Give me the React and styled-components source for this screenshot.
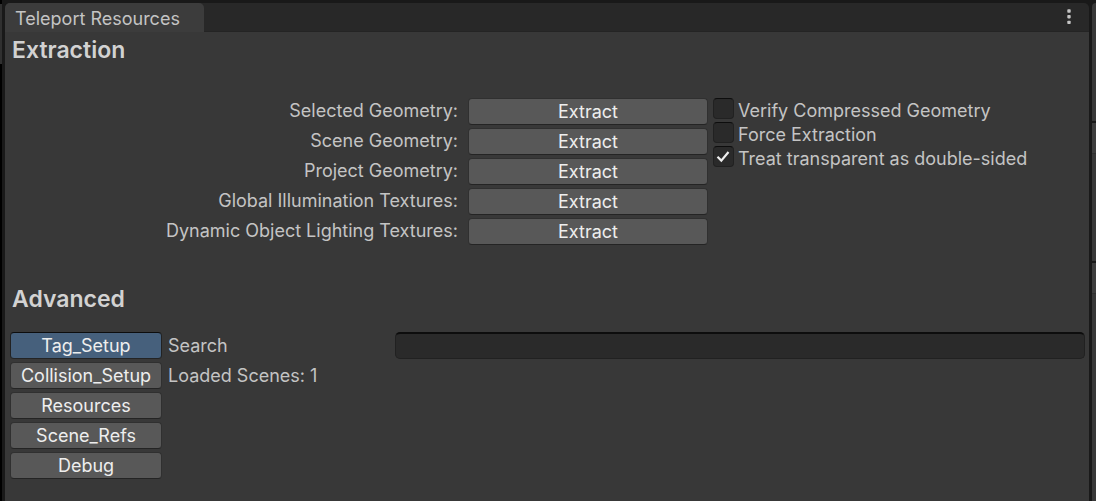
import React, { useState } from "react";
import styled, { createGlobalStyle } from "styled-components";

const Global = createGlobalStyle`
  * { box-sizing: border-box; }
  body {
    margin: 0;
    background: #191919;
    color: #c4c4c4;
    font: 18px/24px Inter, "Liberation Sans", sans-serif;
    overflow: hidden;
  }
  button, input { font: inherit; margin: 0; }
`;

const Desktop = styled.div`
  display: grid;
  grid-template-columns: 2px minmax(0, 1fr) 4px;
  column-gap: 3px;
  min-height: 100vh;
`;

const LeftDock = styled.div`
  display: flex;
  flex-direction: column;
  background: #000;
`;

const LeftDockHead = styled.div`
  height: 60px;
  margin-top: 4px;
  background: #303030;
`;

const RightDock = styled.div`
  display: flex;
  flex-direction: column;
  gap: 2px;
  padding-top: 3px;
`;

const DockPane = styled.div`
  flex: ${(p) => (p.$height ? `0 0 ${p.$height}px` : "1")};
  background: #383838;
  border-top-left-radius: ${(p) => (p.$rounded ? 4 : 0)}px;
`;

const DockHeader = styled.div`
  height: 31px;
  background: #3e3e3e;
  border-bottom: 1px solid #303030;
`;

const Window = styled.main`
  display: flex;
  flex-direction: column;
  padding-top: 3px;
`;

const TabBar = styled.header`
  display: flex;
  justify-content: space-between;
  height: 29px;
  background: #282828;
  border-radius: 5px 5px 0 0;
  border-bottom: 1px solid #242424;
`;

const WindowTab = styled.div`
  height: 29px;
  padding: 4px 24px 0 10px;
  background: #3c3c3c;
  border-radius: 5px 5px 0 0;
`;

const MenuButton = styled.button`
  width: 40px;
  padding: 0;
  border: 0;
  background: none;
  color: #c4c4c4;
  svg { display: block; margin: auto; }
`;

const Content = styled.div`
  flex: 1;
  padding: 6px 4px 20px 5px;
  background: #383838;
`;

const Heading = styled.h2`
  margin: 0;
  padding-left: 2px;
  font-size: 23px;
  line-height: 24px;
  font-weight: 600;
  color: #d2d2d2;
`;

const Extraction = styled.section`
  display: flex;
  align-items: flex-start;
  gap: 5px;
  padding: 36px 0 42px;
`;

const ExtractRows = styled.div`
  display: grid;
  grid-template-columns: 448px 240px;
  column-gap: 10px;
  row-gap: 3px;
`;

const RowLabel = styled.span`
  text-align: right;
  line-height: 26px;
`;

const Button = styled.button`
  height: 27px;
  padding: 0;
  border: 1px solid;
  border-color: ${(p) => (p.$active ? "#0d0d0d #222 #242424" : "#303030 #303030 #242424")};
  border-radius: 4px;
  background: ${(p) => (p.$active ? "#46607c" : "#585858")};
  color: #eee;
  line-height: 25px;
`;

const Options = styled.div`
  display: flex;
  flex-direction: column;
`;

const Option = styled.label`
  display: flex;
  gap: 4px;
  height: 24px;
  line-height: 26px;
`;

const CheckBox = styled.span`
  display: grid;
  width: 21px;
  height: 21px;
  border: 1px solid #212121;
  border-top-color: #0d0d0d;
  border-radius: 4px;
  background: #2a2a2a;
  & > * { grid-area: 1 / 1; }
  input { appearance: none; width: 19px; height: 19px; }
  svg { pointer-events: none; visibility: hidden; }
  input:checked + svg { visibility: visible; }
`;

const Advanced = styled.section`
  display: grid;
  grid-template-columns: 152px minmax(0, 1fr);
  column-gap: 6px;
  padding-top: 21px;
`;

const Pages = styled.nav`
  display: flex;
  flex-direction: column;
  gap: 3px;
`;

const SearchRow = styled.label`
  display: grid;
  grid-template-columns: 220px minmax(0, 1fr);
  column-gap: 7px;
  height: 30px;
  line-height: 27px;
`;

const SearchField = styled.input`
  width: 100%;
  height: 27px;
  padding: 0 6px;
  border: 1px solid #212121;
  border-top: 2px solid #0d0d0d;
  border-radius: 5px;
  background: #2a2a2a;
  color: #d2d2d2;
`;

const Status = styled.div`
  line-height: 27px;
`;

const extractions = [
  "Selected Geometry:",
  "Scene Geometry:",
  "Project Geometry:",
  "Global Illumination Textures:",
  "Dynamic Object Lighting Textures:",
];

const options = [
  ["Verify Compressed Geometry", false],
  ["Force Extraction", false],
  ["Treat transparent as double-sided", true],
];

const pages = ["Tag_Setup", "Collision_Setup", "Resources", "Scene_Refs", "Debug"];

export default function App() {
  const [page, setPage] = useState(pages[0]);
  return (
    <>
      <Global />
      <Desktop>
        <LeftDock><LeftDockHead /></LeftDock>
        <Window>
          <TabBar>
            <WindowTab>Teleport Resources</WindowTab>
            <MenuButton aria-label="Window menu">
              <svg width="4" height="16" fill="currentColor">
                <rect width="3.4" height="3.4" rx="0.8" x="0.3" y="0.3" />
                <rect width="3.4" height="3.4" rx="0.8" x="0.3" y="6" />
                <rect width="3.4" height="3.4" rx="0.8" x="0.3" y="11.7" />
              </svg>
            </MenuButton>
          </TabBar>
          <Content>
            <Heading>Extraction</Heading>
            <Extraction>
              <ExtractRows>
                {extractions.map((name) => (
                  <React.Fragment key={name}>
                    <RowLabel>{name}</RowLabel>
                    <Button aria-label={`Extract ${name}`}>Extract</Button>
                  </React.Fragment>
                ))}
              </ExtractRows>
              <Options>
                {options.map(([name, on]) => (
                  <Option key={name}>
                    <CheckBox>
                      <input type="checkbox" defaultChecked={on} />
                      <svg width="19" height="19" fill="none" stroke="#eee" strokeWidth="2.2">
                        <path d="M3.5 9.8 7.3 13.6 14.5 5" />
                      </svg>
                    </CheckBox>
                    {name}
                  </Option>
                ))}
              </Options>
            </Extraction>
            <Heading>Advanced</Heading>
            <Advanced>
              <Pages>
                {pages.map((name) => (
                  <Button key={name} $active={name === page} onClick={() => setPage(name)}>
                    {name}
                  </Button>
                ))}
              </Pages>
              <div>
                <SearchRow>
                  Search
                  <SearchField type="text" />
                </SearchRow>
                <Status>Loaded Scenes: 1</Status>
              </div>
            </Advanced>
          </Content>
        </Window>
        <RightDock>
          <DockPane $height={118} $rounded />
          <DockPane $height={138}><DockHeader /></DockPane>
          <DockPane><DockHeader /></DockPane>
        </RightDock>
      </Desktop>
    </>
  );
}
